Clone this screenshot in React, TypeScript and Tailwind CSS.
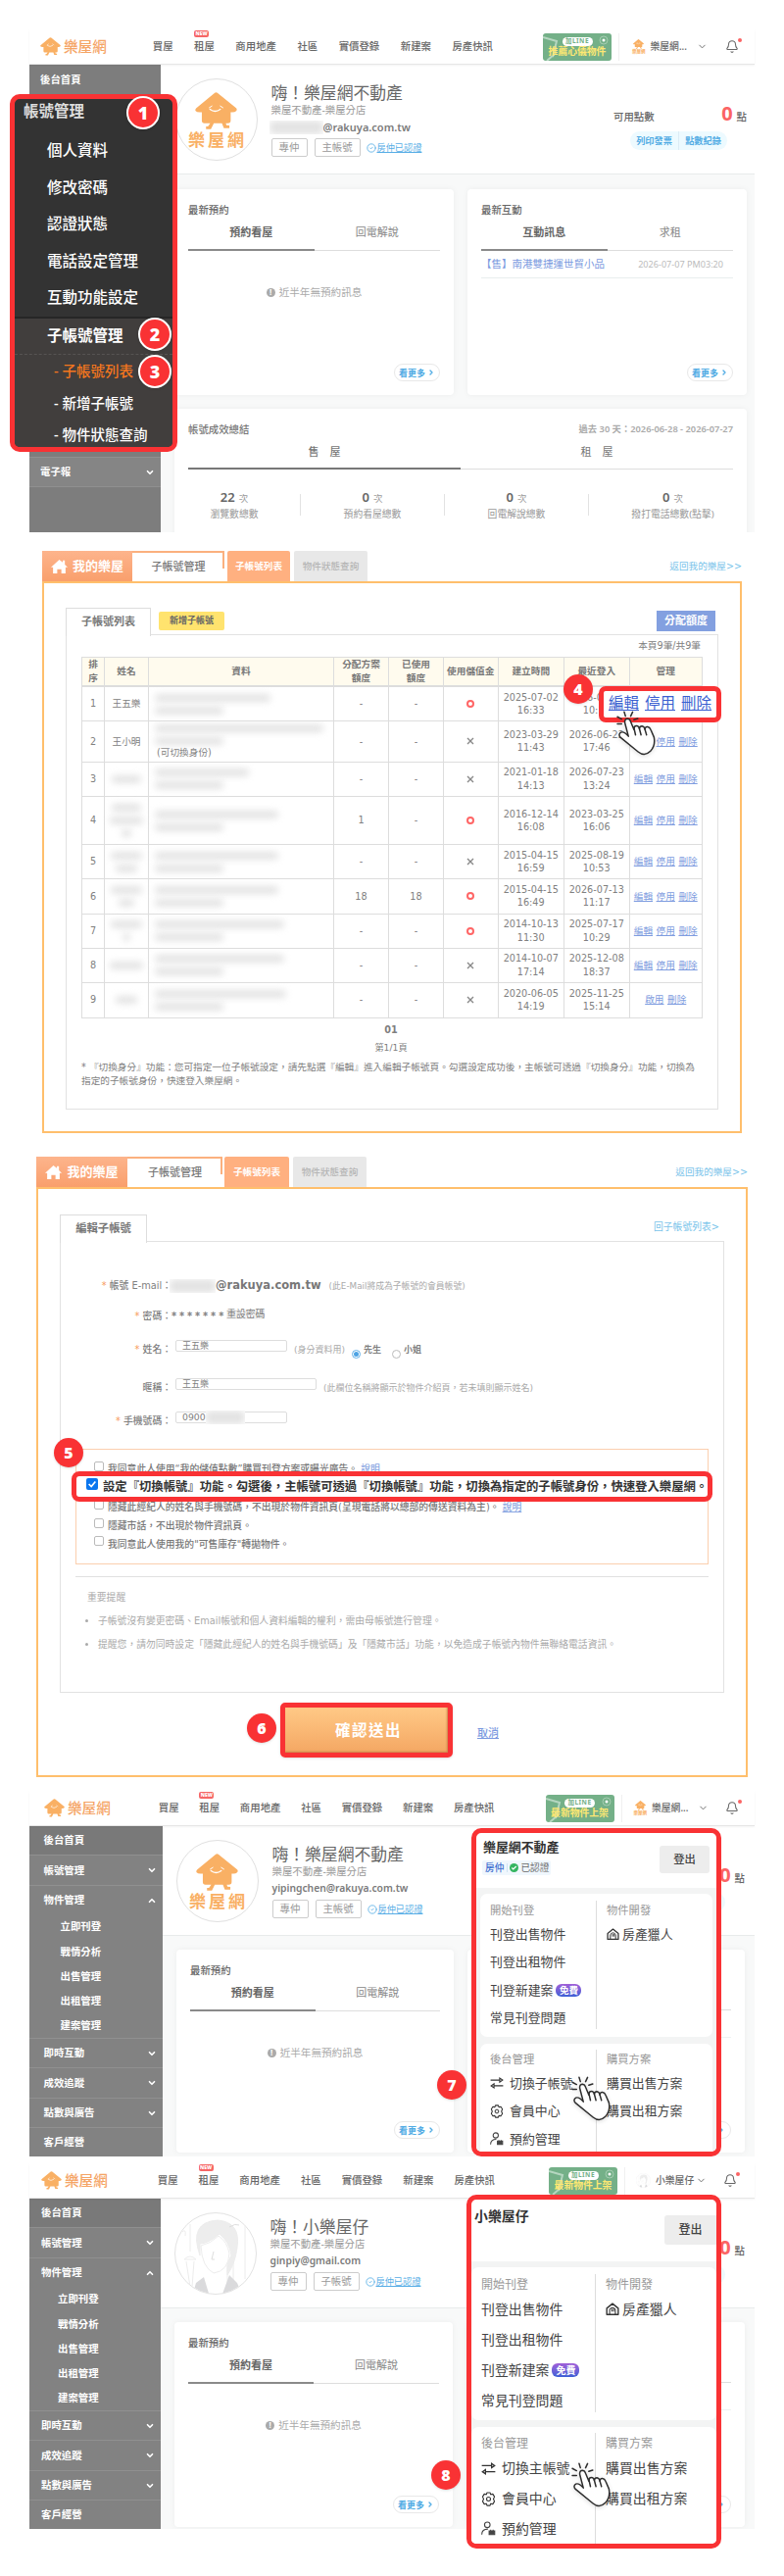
import { Fragment, type ReactNode } from 'react';
import { Bell, ChevronDown, ChevronUp, ChevronRight, CircleCheck } from 'lucide-react';

const NAV_ITEMS = ['買屋', '租屋', '商用地產', '社區', '實價登錄', '新建案', '房產快訊'];

const ACCOUNTS = [
  { h: 'h-[35px]', name: '王五樂', info: ['w-[118px]', 'w-[70px]'], quota: '-', used: '-', credit: true, created: ['2025-07-02', '16:33'], login: ['2026-07-27', '10:12'], actions: [] },
  { h: 'h-[41.5px]', name: '王小明', info: ['w-[172px]', 'w-[70px]'], switchable: true, quota: '-', used: '-', credit: false, created: ['2023-03-29', '11:43'], login: ['2026-06-22', '17:46'] },
  { h: 'h-[35.5px]', mask: ['w-[30px]'], info: ['w-[96px]', 'w-[70px]'], quota: '-', used: '-', credit: false, created: ['2021-01-18', '14:13'], login: ['2026-07-23', '13:24'] },
  { h: 'h-[49px]', mask: ['w-[30px]', 'w-[34px]', 'w-[10px]'], info: ['w-[126px]', 'w-[70px]'], quota: '1', used: '-', credit: true, created: ['2016-12-14', '16:08'], login: ['2023-03-25', '16:06'] },
  { h: 'h-[35px]', mask: ['w-[32px]', 'w-[22px]'], info: ['w-[126px]', 'w-[70px]'], quota: '-', used: '-', credit: false, created: ['2015-04-15', '16:59'], login: ['2025-08-19', '10:53'] },
  { h: 'h-[35.5px]', mask: ['w-[32px]', 'w-[16px]'], info: ['w-[126px]', 'w-[70px]'], quota: '18', used: '18', credit: true, created: ['2015-04-15', '16:49'], login: ['2026-07-13', '11:17'] },
  { h: 'h-[35px]', mask: ['w-[32px]', 'w-[8px]'], info: ['w-[132px]', 'w-[70px]'], quota: '-', used: '-', credit: true, created: ['2014-10-13', '11:30'], login: ['2025-07-17', '10:29'] },
  { h: 'h-[35px]', mask: ['w-[34px]'], info: ['w-[132px]', 'w-[70px]'], quota: '-', used: '-', credit: false, created: ['2014-10-07', '17:14'], login: ['2025-12-08', '18:37'] },
  { h: 'h-[36px]', mask: ['w-[22px]'], info: ['w-[134px]', 'w-[70px]'], quota: '-', used: '-', credit: false, created: ['2020-06-05', '14:19'], login: ['2025-11-25', '15:14'], actions: ['啟用', '刪除'] },
];

const COLS = 'grid grid-cols-[23px_45px_189px_56px_56px_55.5px_67.5px_66.5px_74.5px]';

/* ---------- drawings ---------- */

function House({ className = '' }: { className?: string }) {
  return (
    <svg viewBox="0 0 130 116" className={className}>
      <path
        d="M60 3q5-4 10 0l57 46q4 5 0 9t-11 4h-6v26q0 8-9 8h-6l2 6 9 1v8H89l-6-15H58l-9 18H34v-8h6l7-10H29q-8 0-8-8V62h-7q-9 0-12-4t2-9z"
        fill="#f9b064"
      />
      <path d="M44 48l8-5M78 43l8 5" stroke="#fff" strokeWidth="3" strokeLinecap="round" />
      <path d="M46 53q16 12 32 0" fill="none" stroke="#fff" strokeWidth="4" strokeLinecap="round" />
    </svg>
  );
}

function LadyAvatar({ className = '' }: { className?: string }) {
  return (
    <svg viewBox="0 0 84 84" className={className}>
      <defs>
        <clipPath id="avatar-clip">
          <circle cx="42" cy="42" r="41" />
        </clipPath>
      </defs>
      <circle cx="42" cy="42" r="41.5" fill="#fff" stroke="#e2e2e2" />
      <g clipPath="url(#avatar-clip)" fill="none" stroke="#ececec">
        <path d="M16 12v28M60 16v56M72 12v56M54 40v40M10 48q6-6 12 0zM12 50l4 26M20 50l-2 26" />
        <path d="M8 20q4-4 3 4" />
        <path d="M26 44q-12-34 18-36 24 2 20 28-2 16-10 28-1-12 4-20-2-14-12-22-12 10-20 10z" fill="#ededed" />
        <path d="M27 34q10-2 18-10 9 6 11 18-1 18-16 20-12-6-13-28z" fill="#fff" />
        <path d="M40 40l-2 8h3M56 15q6-4 10-2" stroke="#ddd" />
        <path d="M30 66l-8 6-4 14h18zM56 64l8 8 6 14H48z" fill="#dadadc" stroke="none" />
      </g>
    </svg>
  );
}

function Hand({ className = '' }: { className?: string }) {
  return (
    <svg
      viewBox="0 0 124 142"
      className={`absolute drop-shadow-sm ${className}`}
      fill="none"
      stroke="#2d2d2d"
      strokeWidth="4.5"
      strokeLinecap="round"
      strokeLinejoin="round"
    >
      <path d="M3 22l13 7M3 44h13M24 7l4 13M50 7l-6 13M54 31l12-4" />
      <path
        d="M37 82L26 40q-1-12 9-12 7 1 9 9l10 24q0-11 8-11 7 0 9 9 1-8 8-8 7 1 9 10 1-9 8-8 7 1 10 9l10 23q5 26-11 43-18 18-38 2L12 85q-7-9 2-15 9-4 23 12z"
        fill="#fff"
      />
      <path d="M54 56l5 22M71 59l5 19M88 61l5 17" />
    </svg>
  );
}

function HunterIcon({ className = '' }: { className?: string }) {
  return (
    <svg viewBox="0 0 24 24" className={className} fill="none" stroke="#333" strokeWidth="2.4" strokeLinejoin="round">
      <path d="M2 21V10l10-8 10 8v11z" />
      <path d="M7 21v-9q5-6 10 0v9M11 11v5M14 11v5" strokeWidth="1.8" />
    </svg>
  );
}

function SwapIcon({ className = '' }: { className?: string }) {
  return (
    <svg viewBox="0 0 24 24" className={className} fill="none" stroke="#333" strokeWidth="2">
      <path d="M1 7h16M23 17H7" />
      <path d="M17 3.500v7L22 7zM7 13.500v7L2 17z" />
    </svg>
  );
}

function GearIcon({ className = '' }: { className?: string }) {
  return (
    <svg viewBox="0 0 24 24" className={className} fill="none" stroke="#333" strokeWidth="1.8" strokeLinejoin="round">
      <path d="M9.500 1.500h5l1 3 3.500-.7 2.700 4.400L20 12l1.700 3.800-2.700 4.400-3.500-.7-1 3h-5l-1-3-3.500.7-2.700-4.400L4 12 2.300 8.200 5 3.800l3.500.7z" />
      <circle cx="12" cy="12" r="3.200" strokeWidth="1.700" />
    </svg>
  );
}

function BookingIcon({ className = '' }: { className?: string }) {
  return (
    <svg viewBox="0 0 24 24" className={className} fill="none" stroke="#444" strokeWidth="1.8">
      <circle cx="10" cy="6" r="4.500" />
      <path d="M1 22q0-9 10-9" />
      <path d="M13 16h9v6h-9zM15.500 14v3M19.500 14v3" fill="#444" />
    </svg>
  );
}

function Badge({ n, className = '', ring }: { n: number; className?: string; ring?: boolean }) {
  return (
    <span
      className={`absolute flex items-center justify-center rounded-full bg-[#f93234] font-['Open_Sans'] font-extrabold text-white shadow ${
        ring ? 'h-[34px] w-[34px] border-2 border-white text-[18px]' : 'h-[30px] w-[30px] text-[16px]'
      } ${className}`}
    >
      {n}
    </span>
  );
}

/* Blurred bar that hides private data */
function Masked({ className = '' }: { className?: string }) {
  return <span className={`block h-[8px] rounded bg-[#e3e3e3] blur-[3.500px] ${className}`} />;
}

/* ---------- member dashboard ---------- */

interface TopBarProps {
  logo: string;
  nav: string;
  banner: string;
  bannerText: string;
  user: ReactNode;
  userClass: string;
  bell: string;
}

function TopBar({ logo, nav, banner, bannerText, user, userClass, bell }: TopBarProps) {
  return (
    <header className="relative z-10 flex h-[36px] items-center border-b border-[#e6e6e6] text-[10.4px] font-medium text-[#666] shadow-[0_1px_2px_#0000000d]">
      <div className={`flex shrink-0 items-center gap-[3px] ${logo}`}>
        <House className="w-[21px]" />
        <span className="text-[14.600px] text-[#f5a465]">樂屋網</span>
      </div>
      <nav className={`flex shrink-0 whitespace-nowrap ${nav}`}>
        {NAV_ITEMS.map((item) => (
          <a key={item} className="relative">
            {item}
            {item === '租屋' && (
              <span className="absolute -top-[11px] left-0 flex h-[7px] w-[15px] items-center justify-center rounded-[2px] bg-[#f66666] text-[5px] font-black text-white">
                NEW
              </span>
            )}
          </a>
        ))}
      </nav>
      <div className={`relative flex h-[28px] w-[70px] shrink-0 flex-col items-center overflow-hidden rounded-[3px] bg-[#74b088] pt-[4px] ${banner}`}>
        <svg viewBox="0 0 70 28" className="absolute inset-0">
          <path d="M0 4l14 4-4 16M4 28l8-7" fill="none" stroke="#b5d6c0" strokeWidth="2" />
          <circle cx="62" cy="7" r="4" fill="none" stroke="#a5cdb2" />
          <circle cx="62" cy="7" r="1.500" fill="#fff" />
        </svg>
        <span className="relative flex h-[9px] w-[31px] items-center justify-center rounded-full bg-white text-[6.500px] font-bold tracking-[0.500px] text-[#74b088]">
          加LINE
        </span>
        <span className="relative mt-px whitespace-nowrap text-[9.800px] font-bold text-[#ffe873]">{bannerText}</span>
      </div>
      <div className="ml-[7px] h-[28px] w-px shrink-0 bg-[#f0f0f0]" />
      <div className={`flex shrink-0 items-center whitespace-nowrap text-[9.800px] ${userClass}`}>{user}</div>
      <div className={`relative shrink-0 ${bell}`}>
        <Bell className="h-[15px] w-[14px]" strokeWidth={1.8} />
        <span className="absolute -right-[3px] -top-px h-[4px] w-[4px] rounded-full bg-[#fb6464]" />
      </div>
    </header>
  );
}

function SideRow({ label, icon, className = '' }: { label: string; icon?: 'down' | 'up'; className?: string }) {
  return (
    <div className={`flex shrink-0 items-center justify-between border-t border-[#909090] pr-[6px] ${className}`}>
      {label}
      {icon === 'down' && <ChevronDown className="h-[10px] w-[10px]" strokeWidth={4} />}
      {icon === 'up' && <ChevronUp className="h-[10px] w-[10px]" strokeWidth={4} />}
    </div>
  );
}

function FullSidebar({ wide }: { wide?: boolean }) {
  const pad = wide ? 'pl-[14.500px]' : 'pl-[12px]';
  const subPad = wide ? 'pl-[31.500px]' : 'pl-[29px]';
  return (
    <aside className={`flex shrink-0 flex-col bg-[#828282] text-[10.4px] font-bold text-white ${wide ? 'w-[136px]' : 'w-[134px]'}`}>
      <div className={`flex h-[29px] shrink-0 items-center bg-[#797979] ${pad}`}>後台首頁</div>
      <SideRow label="帳號管理" icon="down" className={`h-[31px] ${pad}`} />
      <SideRow label="物件管理" icon="up" className={`h-[30px] ${pad}`} />
      <div className={`flex h-[126px] shrink-0 flex-col ${subPad}`}>
        {['立即刊登', '戰情分析', '出售管理', '出租管理', '建案管理'].map((t) => (
          <div key={t} className="flex h-[25.200px] items-center">{t}</div>
        ))}
      </div>
      <SideRow label="即時互動" icon="down" className={`h-[30px] ${pad}`} />
      <SideRow label="成效追蹤" icon="down" className={`h-[31px] ${pad}`} />
      <SideRow label="點數與廣告" icon="down" className={`h-[30px] ${pad}`} />
      <SideRow label="客戶經營" className={`h-[30px] ${pad}`} />
    </aside>
  );
}

interface ProfileProps {
  avatar: ReactNode;
  name: string;
  email: ReactNode;
  role: string;
  className: string;
  points: string;
  menuOpen?: boolean;
}

function Profile({ avatar, name, email, role, className, points, menuOpen }: ProfileProps) {
  return (
    <div className={`flex h-[112px] shrink-0 border-b border-[#e8ebeb] bg-white text-[#666] ${className}`}>
      <div className="mt-[14px] h-[84px] w-[84px] shrink-0">{avatar}</div>
      <div className="ml-[14px] flex flex-col whitespace-nowrap">
        <h2 className="mt-[20px] flex h-[18px] items-center text-[16.800px]">{name}</h2>
        <p className="flex h-[16px] items-center text-[10.4px] text-[#999]">樂屋不動產-樂屋分店</p>
        <p className="flex h-[19px] items-center text-[10.300px] font-semibold text-[#7b7b7b]">{email}</p>
        <div className="mt-[2px] flex items-center text-[10.4px] text-[#999]">
          <span className="flex h-[19px] w-[37px] items-center justify-center rounded-[2px] border border-[#ccc]">專仲</span>
          <span className="ml-[7px] flex h-[19px] w-[47px] items-center justify-center rounded-[2px] border border-[#ccc]">{role}</span>
          <CircleCheck className="ml-[6px] h-[10px] w-[10px] text-[#58aee6]" />
          <a className="ml-px text-[9.200px] text-[#58aee6] underline">房仲已認證</a>
        </div>
      </div>
      <div className={`ml-auto flex w-[136px] shrink-0 flex-col ${points}`}>
        <div className="mt-[38px] flex h-[24px] items-center text-[10.4px] font-medium">
          {!menuOpen && <span className="pt-[6px]">可用點數</span>}
          <span className="ml-auto font-['Open_Sans'] text-[20px] font-bold text-[#fb6464]">0</span>
          <span className="ml-[4px] pt-[6px]">點</span>
        </div>
        <div className="ml-[17px] mt-[6px] flex h-[19px] w-[99px] rounded-full bg-[#edfaff] text-[9.200px] font-bold text-[#52ace4]">
          {!menuOpen && (
            <>
              <span className="flex flex-1 items-center justify-center border-r border-[#dcecf5]">列印發票</span>
              <span className="flex flex-1 items-center justify-center">點數紀錄</span>
            </>
          )}
        </div>
      </div>
    </div>
  );
}

function Tabs({ left, right }: { left: string; right: string }) {
  return (
    <div className="flex h-[30px] shrink-0 text-center text-[11px]">
      <span className="flex flex-1 justify-center border-b-2 border-[#8a8a8a] pt-[5px] font-bold text-[#666]">{left}</span>
      <span className="flex flex-1 justify-center border-b border-[#ddd] pt-[5px] text-[#888]">{right}</span>
    </div>
  );
}

function Card({ title, tabs, children }: { title: string; tabs: [string, string]; children?: ReactNode }) {
  return (
    <div className="flex flex-1 flex-col rounded-[4px] bg-white px-[14px] shadow-[0_0_6px_#0000000d]">
      <h3 className="flex h-[33px] shrink-0 items-end pb-[7px] text-[10.4px] font-medium text-[#666]">{title}</h3>
      <Tabs left={tabs[0]} right={tabs[1]} />
      {children}
      <span className="mb-[14px] ml-auto mt-auto flex h-[18px] w-[47px] shrink-0 items-center justify-center gap-[2px] rounded-full border border-[#e8e8e8] text-[9px] font-bold text-[#52ace4]">
        看更多
        <ChevronRight className="h-[8px] w-[8px]" strokeWidth={4} />
      </span>
    </div>
  );
}

/* Card that sits behind the open menu, only its right edge shows */
function CoveredCard() {
  return (
    <div className="flex flex-1 flex-col rounded-[4px] bg-white px-[14px] shadow-[0_0_6px_#0000000d]">
      <div className="h-[62px] shrink-0 border-b border-[#ddd]" />
      <div className="h-[28px] shrink-0 border-b border-[#eef2f2]" />
      <span className="mb-[14px] ml-auto mt-auto flex h-[18px] w-[47px] shrink-0 items-center justify-end rounded-full border border-[#e8e8e8] pr-[5px] text-[#52ace4]">
        <ChevronRight className="h-[8px] w-[8px]" strokeWidth={4} />
      </span>
    </div>
  );
}

function NoBooking() {
  return (
    <p className="mt-[37px] flex items-center justify-center gap-[4px] text-[10.600px] text-[#aaa]">
      <span className="flex h-[9px] w-[9px] items-center justify-center rounded-full bg-[#aaa] text-[8px] font-bold text-white">!</span>
      近半年無預約訊息
    </p>
  );
}

function BrandAvatar() {
  return (
    <div className="flex h-[84px] w-[84px] flex-col items-center rounded-full border border-[#e0e0e0] bg-white pt-[13px]">
      <House className="w-[43px]" />
      <span className="mt-[2px] whitespace-nowrap text-[17px] font-bold tracking-[3px] text-[#f9b064] [margin-right:-3px]">樂屋網</span>
    </div>
  );
}

function BrandUser({ gap }: { gap: string }) {
  return (
    <>
      <span className="mr-[5px] flex flex-col items-center">
        <House className="w-[11px]" />
        <span className="text-[4.500px] font-bold text-[#f9b064]">樂屋網</span>
      </span>
      樂屋網...
      <ChevronDown className={`h-[11px] w-[11px] ${gap}`} />
    </>
  );
}

function Stat({ value, label, className }: { value: string; label: string; className: string }) {
  return (
    <div className={`flex flex-col items-center ${className}`}>
      <p className="text-[9.500px] text-[#999]">
        <span className="mr-[4px] text-[13px] font-semibold text-[#666]">{value}</span>次
      </p>
      <p className="mt-[6px] text-[9.800px] text-[#999]">{label}</p>
    </div>
  );
}

function StepOne() {
  return (
    <section className="relative h-[543px] px-[30px] pt-[30px]">
      <TopBar
        logo="ml-[11px]"
        nav="ml-[47px] gap-[21.500px]"
        banner="ml-[51px]"
        bannerText="推薦心儀物件"
        user={<BrandUser gap="ml-[10px]" />}
        userClass="ml-[13px]"
        bell="ml-[18px]"
      />
      <div className="flex h-[477px]">
        <aside className="flex w-[134px] shrink-0 flex-col bg-[#7d7d7d] text-[10.4px] font-bold text-white">
          <div className="flex h-[30px] items-center pl-[11px]">後台首頁</div>
          <div className="h-[370px]" />
          <SideRow label="電子報" icon="down" className="h-[31px] border-b bg-[#858585] pl-[11px]" />
        </aside>
        <main className="flex flex-1 flex-col overflow-hidden bg-[#f8f9f9]">
          <Profile
            avatar={<BrandAvatar />}
            name="嗨！樂屋網不動產"
            email={
              <>
                <span className="-ml-[2px] w-[55px] overflow-hidden"><Masked className="h-[14px]" /></span>
                <span className="text-[11px]">@rakuya.com.tw</span>
              </>
            }
            role="主帳號"
            className="pl-[14.500px] pr-[8px]"
            points=""
          />
          <div className="mt-[15px] flex h-[210px] shrink-0 gap-[14px] pl-[14px] pr-[8px]">
            <Card title="最新預約" tabs={['預約看屋', '回電解說']}>
              <NoBooking />
            </Card>
            <Card title="最新互動" tabs={['互動訊息', '求租']}>
              <div className="flex h-[28px] shrink-0 items-center justify-between border-b border-[#e8eeee] pr-[10px] text-[10.500px] text-[#7b9ae0]">
                <span>【售】南港雙捷運世貿小品</span>
                <span className="text-[9.100px] text-[#bbb]">2026-07-07 PM03:20</span>
              </div>
            </Card>
          </div>
          <div className="ml-[14px] mr-[8px] mt-[14px] flex h-[150px] shrink-0 flex-col rounded-[4px] bg-white shadow-[0_0_6px_#0000000d]">
            <div className="flex h-[31px] shrink-0 items-center justify-between px-[14px] pt-[11px] text-[10.4px] font-medium text-[#777]">
              帳號成效總結
              <span className="text-[9.300px] font-semibold text-[#aaa]">過去 30 天：2026-06-28 - 2026-07-27</span>
            </div>
            <div className="mx-[14px] flex h-[31px] shrink-0 text-[11px]">
              <span className="flex flex-1 justify-center whitespace-pre border-b-2 border-[#777] pt-[7px] font-medium text-[#777]">售　屋</span>
              <span className="flex flex-1 justify-center whitespace-pre border-b border-[#ddd] pt-[7px] text-[#777]">租　屋</span>
            </div>
            <div className="mt-[22px] flex">
              <Stat value="22" label="瀏覽數總數" className="w-[128px] pr-[6px]" />
              <div className="mt-[3px] h-[22px] w-px bg-[#e2e2e2]" />
              <Stat value="0" label="預約看屋總數" className="w-[146px]" />
              <div className="mt-[3px] h-[22px] w-px bg-[#e2e2e2]" />
              <Stat value="0" label="回電解說總數" className="w-[146px]" />
              <div className="mt-[3px] h-[22px] w-px bg-[#e2e2e2]" />
              <Stat value="0" label="撥打電話總數(點擊)" className="flex-1 pl-[10px]" />
            </div>
          </div>
        </main>
      </div>

      {/* Enlarged account menu */}
      <div className="absolute left-[10px] top-[96px] z-20 flex h-[365px] w-[171px] flex-col overflow-hidden rounded-[10px] border-[5px] border-[#f93234] bg-[#333] text-[15.500px] font-medium text-white">
        <div className="flex h-[34px] shrink-0 items-center pl-[9px] pb-[8px] font-bold text-[#ddd]">帳號管理</div>
        {['個人資料', '修改密碼', '認證狀態', '電話設定管理', '互動功能設定'].map((t) => (
          <div key={t} className="flex h-[37.500px] shrink-0 items-center pl-[33px]">{t}</div>
        ))}
        <div className="flex h-[38px] shrink-0 items-center border-t-2 border-[#262626] bg-[#413e3d] pl-[33px] font-bold">子帳號管理</div>
        <div className="flex flex-1 flex-col border-t border-dashed border-[#575453] bg-[#413e3d] pl-[40px] text-[14.500px]">
          <span className="flex h-[33px] items-center text-[#f4761e]">- 子帳號列表</span>
          <span className="flex h-[33px] items-center">- 新增子帳號</span>
          <span className="flex h-[32px] items-center">- 物件狀態查詢</span>
        </div>
      </div>
      <Badge n={1} ring className="left-[129px] top-[98px] z-30" />
      <Badge n={2} ring className="left-[141px] top-[324px] z-30" />
      <Badge n={3} ring className="left-[141px] top-[362px] z-30" />
    </section>
  );
}

/* ---------- sub-account pages ---------- */

function OrangeTabs({ first, second, third, fourth }: { first: string; second: string; third: string; fourth: string }) {
  return (
    <div className="flex h-[31px] items-center">
      <span className={`flex h-full items-center justify-center gap-[5px] bg-gradient-to-b from-[#fdb48c] to-[#f99f6c] text-[13px] font-bold text-white ${first}`}>
        <svg viewBox="0 0 24 22" className="h-[16px] w-[17px]" fill="#fff">
          <path d="M12 1L0 12h3v9h6v-6h6v6h6v-9h3l-4-4V2h-3v3z" />
        </svg>
        我的樂屋
      </span>
      <span className={`relative flex h-full items-center justify-center border-t-2 border-[#fbb07e] bg-white text-[11px] font-medium text-[#777] ${second}`}>
        子帳號管理
        <span className="absolute right-0 top-0 h-[16px] w-[2px] bg-[#fbb07e]" />
      </span>
      <span className={`flex h-full items-center justify-center rounded-t-[2px] bg-[#ffb080] text-[9.600px] font-bold text-white ${third}`}>子帳號列表</span>
      <span className={`flex h-full items-center justify-center rounded-t-[2px] bg-[#e8e8e8] text-[9.600px] font-medium text-[#b5b5b5] ${fourth}`}>物件狀態查詢</span>
      <a className="ml-auto text-[9.600px] text-[#78c3ea]">返回我的樂屋&gt;&gt;</a>
    </div>
  );
}

function Th({ children }: { children?: ReactNode }) {
  return <div className="flex items-center justify-center border-r border-[#ddd] text-center leading-[14px]">{children}</div>;
}

function Td({ children, className = '' }: { children?: ReactNode; className?: string }) {
  return <div className={`flex items-center justify-center border-r border-[#ddd] text-center leading-[13.500px] ${className}`}>{children}</div>;
}

function StepList() {
  return (
    <section className="relative h-[613px] pl-[43px] pr-[43px] pt-[19px] font-['DejaVu_Sans','Noto_Sans_CJK_TC',sans-serif]">
      <OrangeTabs first="w-[92px]" second="w-[94px]" third="ml-[3px] w-[64px]" fourth="ml-[4px] w-[75px]" />
      <div className="flex h-[563px] flex-col border-2 border-[#ffbf6c] px-[22px] pt-[24px] text-[#808080]">
        <div className="flex h-[28px] shrink-0 items-center">
          <span className="relative top-px flex h-[29px] w-[87px] items-center justify-center border border-b-0 border-[#ddd] bg-white text-[11px] font-bold text-[#777]">
            子帳號列表
          </span>
          <span className="ml-[8px] flex h-[19px] w-[67px] items-center justify-center rounded-[2px] bg-[#ffe36e] text-[9px] font-bold text-[#666]">
            新增子帳號
          </span>
          <span className="ml-auto mr-[3px] flex h-[21px] w-[60px] items-center justify-center bg-[#83a0e0] text-[11px] font-bold text-white">
            分配額度
          </span>
        </div>
        <div className="flex h-[485px] shrink-0 flex-col border border-[#e2e2e2] pl-[15px] pr-[17px] text-[9.670px]">
          <p className="flex h-[22px] shrink-0 items-center justify-end">本頁9筆/共9筆</p>
          <div className="w-[634px] border-l border-t border-[#ddd]">
            <div className={`${COLS} h-[30px] border-b-2 border-[#ddd] bg-[#fffbee] font-bold text-[#777]`}>
              <Th>排<br />序</Th>
              <Th>姓名</Th>
              <Th>資料</Th>
              <Th>分配方案<br />額度</Th>
              <Th>已使用<br />額度</Th>
              <Th>使用儲值金</Th>
              <Th>建立時間</Th>
              <Th>最近登入</Th>
              <Th>管理</Th>
            </div>
            {ACCOUNTS.map((a, i) => (
              <div key={i} className={`${COLS} ${a.h} border-b border-[#ddd]`}>
                <Td>{i + 1}</Td>
                <Td>
                  {a.name ?? (
                    <span className="flex flex-col items-center gap-[5px]">
                      {a.mask?.map((w, j) => <Masked key={j} className={w} />)}
                    </span>
                  )}
                </Td>
                <div className="flex flex-col justify-center gap-[5px] overflow-hidden border-r border-[#ddd] pl-[6px]">
                  {a.info.map((w, j) => <Masked key={j} className={`shrink-0 ${w}`} />)}
                  {a.switchable && <span className="-mt-[2px] pl-[2px]">(可切換身份)</span>}
                </div>
                <Td>{a.quota}</Td>
                <Td>{a.used}</Td>
                <Td>
                  {a.credit ? (
                    <span className="h-[8px] w-[8px] rounded-full border-2 border-[#f66]" />
                  ) : (
                    <svg viewBox="0 0 8 8" className="h-[8px] w-[8px]" stroke="#888" strokeWidth="1.400">
                      <path d="M1 1l6 6M7 1L1 7" />
                    </svg>
                  )}
                </Td>
                <Td>{a.created[0]}<br />{a.created[1]}</Td>
                <Td>{a.login[0]}<br />{a.login[1]}</Td>
                <Td className="gap-[3.500px] text-[#7f9de0]">
                  {(a.actions ?? ['編輯', '停用', '刪除']).map((t) => (
                    <a key={t} className="underline">{t}</a>
                  ))}
                </Td>
              </div>
            ))}
          </div>
          <p className="mt-[7px] text-center font-bold">01</p>
          <p className="mt-[9px] text-center text-[9.200px]">第1/1頁</p>
          <p className="mt-[9px] whitespace-nowrap leading-[13.600px]">
            * 『切換身分』功能：您可指定一位子帳號設定，請先點選『編輯』進入編輯子帳號頁。勾選設定成功後，主帳號可透過『切換身分』功能，切換為
            <br />
            指定的子帳號身份，快速登入樂屋網。
          </p>
        </div>
      </div>

      <div className="absolute left-[611px] top-[157px] z-10 flex h-[37px] w-[125px] items-center justify-center gap-[6px] rounded-[7px] border-[5px] border-[#f93234] bg-white text-[15.500px] text-[#3b5fd0]">
        <a className="underline">編輯</a>
        <a className="underline">停用</a>
        <a className="underline">刪除</a>
      </div>
      <Badge n={4} className="left-[575px] top-[145px] z-20" />
      <Hand className="left-[629px] top-[181px] z-20 w-[41px]" />
    </section>
  );
}

function FormRow({ label, required, className, children }: { label: string; required?: boolean; className: string; children: ReactNode }) {
  return (
    <div className={`flex shrink-0 items-center ${className}`}>
      <span className="w-[98px] shrink-0 whitespace-nowrap text-right font-medium">
        {required && <span className="text-[#f79a5c]">* </span>}
        {label}：
      </span>
      {children}
    </div>
  );
}

function Check({ children, className = '' }: { children: ReactNode; className?: string }) {
  return (
    <div className={`flex h-[18.700px] shrink-0 items-center gap-[4px] whitespace-nowrap ${className}`}>
      <span className="-mt-[6px] h-[10px] w-[10px] shrink-0 rounded-[2px] border border-[#bbb] bg-white" />
      <span>{children}</span>
    </div>
  );
}

function StepEdit() {
  return (
    <section className="relative h-[657px] px-[37px] pt-[24px] font-['DejaVu_Sans','Noto_Sans_CJK_TC',sans-serif]">
      <OrangeTabs first="w-[93px]" second="w-[97px]" third="ml-[2px] w-[66px]" fourth="ml-[4px] w-[75px]" />
      <div className="flex h-[602px] flex-col border-2 border-[#ffbf6c] px-[22px] pt-[25px] text-[9.800px] text-[#808080]">
        <div className="flex h-[28px] shrink-0 items-center justify-between">
          <span className="relative top-px flex h-[29px] w-[89px] items-center justify-center border border-b-0 border-[#ddd] bg-white text-[11.300px] font-bold text-[#777]">
            編輯子帳號
          </span>
          <a className="mr-[5px] text-[#78c3ea]">回子帳號列表&gt;</a>
        </div>
        <div className="flex h-[461px] shrink-0 flex-col border border-[#e2e2e2] px-[15px] pt-[30px]">
          <FormRow label="帳號 E-mail" required className="h-[30px]">
            <span className="-ml-[2px] w-[47px] overflow-hidden"><Masked className="h-[14px]" /></span>
            <span className="text-[11.500px] font-bold text-[#777]">@rakuya.com.tw</span>
            <span className="ml-[8px] text-[8.800px] text-[#aaa]">(此E-Mail將成為子帳號的會員帳號)</span>
          </FormRow>
          <FormRow label="密碼" required className="h-[31px]">
            <span className="font-bold tracking-[2.900px]">*******</span>
            <span className="-mt-[3px] bg-[#f4f4f4]">重設密碼</span>
          </FormRow>
          <FormRow label="姓名" required className="h-[38px]">
            <span className="-mt-[8px] ml-[4px] flex h-[12px] w-[114px] items-center rounded-[2px] border border-[#ddd] pl-[6px] text-[9px]">王五樂</span>
            <span className="ml-[7px] text-[9px] text-[#aaa]">(身分資料用)</span>
            <span className="ml-[7px] mt-[8px] flex h-[9px] w-[9px] items-center justify-center rounded-full border border-[#63b0e8]">
              <span className="h-[5px] w-[5px] rounded-full bg-[#4da3e4]" />
            </span>
            <span className="ml-[3px] text-[9px] font-bold">先生</span>
            <span className="ml-[11px] mt-[8px] h-[9px] w-[9px] rounded-full border border-[#bbb]" />
            <span className="ml-[3px] text-[9px] font-bold">小姐</span>
          </FormRow>
          <FormRow label="暱稱" className="h-[40px]">
            <span className="-mt-[8px] ml-[4px] flex h-[12px] w-[144px] items-center rounded-[2px] border border-[#ddd] pl-[6px] text-[9px]">王五樂</span>
            <span className="ml-[7px] text-[9px] text-[#aaa]">(此欄位名稱將顯示於物件介紹頁，若未填則顯示姓名)</span>
          </FormRow>
          <FormRow label="手機號碼" required className="h-[27px]">
            <span className="-mt-[8px] ml-[4px] flex h-[12px] w-[114px] items-center rounded-[2px] border border-[#ddd] pl-[6px] text-[9.300px]">
              0900
              <span className="w-[40px] overflow-hidden bg-white"><Masked className="h-[14px]" /></span>
            </span>
          </FormRow>

          <div className="mt-[15px] flex h-[118px] shrink-0 flex-col border border-[#fbcfae] pl-[18px] pt-[11px] font-medium text-[#777]">
            <Check>
              我同意此人使用“我的儲值點數”購買刊登方案或曝光廣告。 <a className="text-[#8aa6e2] underline">說明</a>
            </Check>
            <Check className="mt-[20px]">
              隱藏此經紀人的姓名與手機號碼，不出現於物件資訊頁(呈現電話將以總部的傳送資料為主)。 <a className="text-[#8aa6e2] underline">說明</a>
            </Check>
            <Check>隱藏市話，不出現於物件資訊頁。</Check>
            <Check>我同意此人使用我的"可售庫存"轉拋物件。</Check>
          </div>
          <div className="mt-[12px] flex flex-col border-t border-[#e0e0e0] pl-[12px] pt-[16px] text-[#aaa]">
            <p>重要提醒</p>
            <ul className="mt-[7px] list-disc pl-[11px] leading-[24.300px]">
              <li>子帳號沒有變更密碼、Email帳號和個人資料編輯的權利，需由母帳號進行管理。</li>
              <li>提醒您，請勿同時設定「隱藏此經紀人的姓名與手機號碼」及「隱藏市話」功能，以免造成子帳號內物件無聯絡電話資訊。</li>
            </ul>
          </div>
        </div>
        <div className="mt-[10px] flex items-center pl-[225px]">
          <div className="flex h-[56px] w-[176px] shrink-0 rounded-[5px] border-[5px] border-[#f93234] shadow">
            <button className="flex-1 bg-gradient-to-b from-[#ffc986] to-[#f4a763] pl-[4px] pt-[3px] text-[15.500px] font-bold tracking-[1.500px] text-white shadow-[inset_-1px_-1px_2px_#c8834a]">
              確認送出
            </button>
          </div>
          <a className="ml-[25px] mt-[6px] text-[11px] font-medium text-[#7b9ae0] underline">取消</a>
        </div>
      </div>

      {/* Highlighted option */}
      <div className="absolute left-[73px] top-[345px] z-10 flex h-[31px] w-[654px] items-center rounded-[8px] border-[5px] border-[#f93234] bg-white">
        <span className="-mt-[6px] ml-[10px] flex h-[12px] w-[12px] shrink-0 items-center justify-center rounded-[2px] bg-[#0b76ee]">
          <svg viewBox="0 0 12 12" className="h-[10px] w-[10px]" fill="none" stroke="#fff" strokeWidth="2">
            <path d="M2 6l3 3 5-6" />
          </svg>
        </span>
        <span className="ml-[5px] mt-[2px] whitespace-nowrap text-[12.350px] font-bold text-[#333]">
          設定『切換帳號』功能。勾選後，主帳號可透過『切換帳號』功能，切換為指定的子帳號身份，快速登入樂屋網。
        </span>
      </div>
      <Badge n={5} className="left-[55px] top-[311px] z-20" />
      <Badge n={6} className="left-[252px] top-[592px] z-20" />
    </section>
  );
}

/* ---------- account switch menus ---------- */

interface MenuProps {
  switchLabel: string;
  header: ReactNode;
  small?: boolean;
}

function MenuBody({ switchLabel, small }: { switchLabel: string; small?: boolean }) {
  const label = small ? 'text-[11.300px] h-[20px]' : 'text-[12px] h-[21px]';
  const row = small ? 'h-[28.500px]' : 'h-[30.800px]';
  const icon = small ? 'h-[14px] w-[14px] mr-[6px]' : 'h-[15px] w-[15px] mr-[6px]';
  const items: [string, ReactNode][] = [
    [switchLabel, <SwapIcon className={icon} />],
    ['會員中心', <GearIcon className={icon} />],
    ['預約管理', <BookingIcon className={icon} />],
  ];
  return (
    <div className={`flex flex-1 flex-col gap-[7px] bg-[#f3f4f4] pt-[6px] text-[#444] ${small ? 'px-[4px] text-[12.900px]' : 'text-[13.900px]'}`}>
      <div className={`flex shrink-0 rounded-[7px] bg-white pt-[7px] pb-[8px] ${small ? 'h-[146px]' : 'h-[156px]'}`}>
        <div className={`shrink-0 border-r border-[#ddd] pl-[10px] ${small ? 'w-[119px]' : 'w-[127px]'}`}>
          <div className={`flex items-center text-[#999] ${label}`}>開始刊登</div>
          {['刊登出售物件', '刊登出租物件', '刊登新建案', '常見刊登問題'].map((t) => (
            <div key={t} className={`flex items-center whitespace-nowrap ${row}`}>
              {t}
              {t === '刊登新建案' && (
                <span className={`ml-[3px] flex items-center justify-center rounded-[6px] bg-gradient-to-b from-[#a05fd8] to-[#3a5fd6] font-bold text-white ${small ? 'h-[13px] w-[26px] text-[9.500px]' : 'h-[14px] w-[28px] text-[10px]'}`}>
                  免費
                </span>
              )}
            </div>
          ))}
        </div>
        <div className="pl-[10px]">
          <div className={`flex items-center text-[#999] ${label}`}>物件開發</div>
          <div className={`flex items-center gap-[3px] ${row}`}>
            <HunterIcon className={small ? 'h-[13px] w-[13px]' : 'h-[14px] w-[14px]'} />
            房產獵人
          </div>
        </div>
      </div>
      <div className="flex flex-1 rounded-t-[7px] bg-white pt-[6px]">
        <div className={`shrink-0 border-r border-[#ddd] pl-[10px] ${small ? 'w-[119px]' : 'w-[127px]'}`}>
          <div className={`flex items-center text-[#999] ${label}`}>後台管理</div>
          {items.map(([t, ic]) => (
            <div key={t} className={`flex items-center whitespace-nowrap ${row}`}>
              {ic}
              {t}
            </div>
          ))}
        </div>
        <div className="pl-[10px]">
          <div className={`flex items-center text-[#999] ${label}`}>購買方案</div>
          <div className={`flex items-center ${row}`}>購買出售方案</div>
          <div className={`flex items-center ${row}`}>購買出租方案</div>
        </div>
      </div>
    </div>
  );
}

function Menu({ switchLabel, header, small }: MenuProps) {
  return (
    <div
      className={`absolute z-20 flex flex-col overflow-hidden rounded-[10px] border-[5px] border-[#f93234] bg-white ${
        small ? 'left-[481px] top-[52px] h-[335px] w-[255px]' : 'left-[476px] top-[39px] h-[361px] w-[260px]'
      }`}
    >
      {header}
      <MenuBody switchLabel={switchLabel} small={small} />
    </div>
  );
}

function StepSwitchToSub() {
  return (
    <section className="relative h-[387px] px-[30px] pt-[14px]">
      <TopBar
        logo="ml-[15px]"
        nav="ml-[49px] gap-[20.750px]"
        banner="ml-[52px]"
        bannerText="最新物件上架"
        user={<BrandUser gap="ml-[10px]" />}
        userClass="ml-[12px]"
        bell="ml-[17px]"
      />
      <div className="flex h-[337px]">
        <FullSidebar wide />
        <main className="flex flex-1 flex-col overflow-hidden bg-[#f8f9f9]">
          <Profile
            avatar={<BrandAvatar />}
            name="嗨！樂屋網不動產"
            email="yipingchen@rakuya.com.tw"
            role="主帳號"
            className="pl-[13.500px] pr-[8px]"
            points="-translate-x-[2px]"
            menuOpen
          />
          <div className="mt-[14px] flex h-[207px] shrink-0 gap-[14px] pl-[14px] pr-[10px]">
            <Card title="最新預約" tabs={['預約看屋', '回電解說']}>
              <NoBooking />
            </Card>
            <CoveredCard />
          </div>
        </main>
      </div>

      <Menu
        small
        switchLabel="切換子帳號"
        header={
          <div className="flex h-[56px] shrink-0 items-start justify-between pl-[7px] pr-[7px]">
            <div>
              <p className="mt-[8px] text-[12.900px] font-bold text-[#333]">樂屋網不動產</p>
              <p className="-ml-px mt-[7px] flex h-[15px] w-[70px] items-center rounded-[2px] bg-[#f0f7fd] pl-[3px] text-[9.700px] text-[#666]">
                <span className="border-r border-[#cfe3f3] pr-[3px] font-medium text-[#3f6fd0]">房仲</span>
                <svg viewBox="0 0 12 12" className="ml-[2px] mr-[2px] h-[9px] w-[9px]">
                  <circle cx="6" cy="6" r="6" fill="#35b560" />
                  <path d="M3 6l2 2 4-4" fill="none" stroke="#fff" strokeWidth="1.600" />
                </svg>
                已認證
              </p>
            </div>
            <span className="mt-[13px] flex h-[28px] w-[51px] items-center justify-center rounded-[3px] bg-[#ededed] text-[11.300px] font-medium text-[#444]">登出</span>
          </div>
        }
      />
      <Badge n={7} className="left-[446px] top-[299px] z-20" />
      <Hand className="left-[583px] top-[304px] z-30 w-[41px]" />
    </section>
  );
}

function StepSwitchToMain() {
  return (
    <section className="relative h-[428px] px-[30px] pt-[7px]">
      <TopBar
        logo="ml-[12px]"
        nav="ml-[51px] gap-[21px]"
        banner="ml-[55px]"
        bannerText="最新物件上架"
        user={
          <Fragment>
            <LadyAvatar className="mr-[5px] h-[15px] w-[15px]" />
            小樂屋仔
            <ChevronDown className="ml-[2px] h-[11px] w-[11px]" />
          </Fragment>
        }
        userClass="ml-[11px]"
        bell="ml-[17px]"
      />
      <div className="flex h-[337px]">
        <FullSidebar />
        <main className="flex flex-1 flex-col overflow-hidden bg-[#f8f9f9]">
          <Profile
            avatar={<LadyAvatar />}
            name="嗨！小樂屋仔"
            email="ginpiy@gmail.com"
            role="子帳號"
            className="pl-[13.500px] pr-[8px]"
            points="-translate-x-[2px]"
            menuOpen
          />
          <div className="mt-[14px] flex h-[209px] shrink-0 gap-[14px] pl-[14px] pr-[10px]">
            <Card title="最新預約" tabs={['預約看屋', '回電解說']}>
              <NoBooking />
            </Card>
            <CoveredCard />
          </div>
        </main>
      </div>

      <Menu
        switchLabel="切換主帳號"
        header={
          <div className="flex h-[63px] shrink-0 items-start justify-between pl-[3px]">
            <p className="mt-[10px] text-[13.900px] font-bold text-[#333]">小樂屋仔</p>
            <span className="mt-[16px] flex h-[30px] w-[53px] items-center justify-center rounded-l-[3px] bg-[#ededed] text-[12px] font-medium text-[#444]">登出</span>
          </div>
        }
      />
      <Badge n={8} className="left-[440px] top-[310px] z-20" />
      <Hand className="left-[583px] top-[311px] z-30 w-[41px]" />
    </section>
  );
}

export default function App() {
  return (
    <div className="w-[800px] overflow-hidden bg-white font-['Noto_Sans','Noto_Sans_CJK_TC',sans-serif] leading-none">
      <StepOne />
      <StepList />
      <StepEdit />
      <StepSwitchToSub />
      <StepSwitchToMain />
    </div>
  );
}
